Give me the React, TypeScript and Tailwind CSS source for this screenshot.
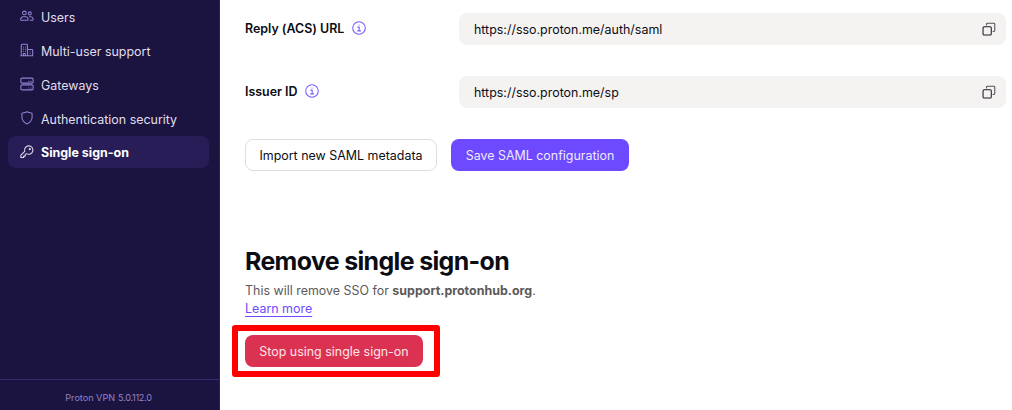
import type { ReactNode } from "react";

interface NavItem {
  label: string;
  icon: ReactNode;
  active?: boolean;
}

interface Field {
  label: string;
  value: string;
}

function Icon({ children, className = "" }: { children: ReactNode; className?: string }) {
  return (
    <svg
      viewBox="0 0 16 16"
      fill="none"
      stroke="currentColor"
      strokeWidth="1.2"
      strokeLinecap="round"
      strokeLinejoin="round"
      className={`size-[14px] shrink-0 ${className}`}
    >
      {children}
    </svg>
  );
}

const navItems: NavItem[] = [
  {
    label: "Users",
    icon: (
      <Icon>
        <circle cx="5" cy="4.5" r="2.1" />
        <circle cx="11.2" cy="5" r="1.7" />
        <path d="M3.2 8.8h3.6c1 0 1.7.6 2 1.5l.5 1.6c.1.5-.2.9-.7.9H1.4c-.5 0-.8-.4-.7-.9l.5-1.6c.3-.9 1-1.5 2-1.5ZM10.8 8.8h1.7c1 0 1.7.6 2 1.5l.6 1.6c.1.5-.2.9-.7.9h-2.9" />
      </Icon>
    ),
  },
  {
    label: "Multi-user support",
    icon: (
      <Icon>
        <path d="M1.5 14.5v-12a1 1 0 0 1 1-1h5a1 1 0 0 1 1 1v12M8.500 7.500h5a1 1 0 0 1 1 1v6H.8M4 14.500v-2.500h2v2.500" />
        <path d="M3.800 4.500h.1M6.200 4.500h.1M3.800 7h.1M6.200 7h.1M3.800 9.500h.1M6.200 9.500h.1M11.500 10h.1M11.500 12.300h.1" />
      </Icon>
    ),
  },
  {
    label: "Gateways",
    icon: (
      <Icon>
        <rect x="1" y="1.3" width="14" height="5.7" rx="1.3" />
        <rect x="1" y="9" width="14" height="5.7" rx="1.3" />
        <path d="M10 5h.1M12.5 5h.1M10 12.5h.1M12.5 12.5h.1" />
      </Icon>
    ),
  },
  {
    label: "Authentication security",
    icon: (
      <Icon>
        <path d="M8 .9c1.5.8 3.3 1.2 5.1 1.3.4 0 .7.3.7.7v4.3c0 3.4-2.3 6-5.8 7.6-3.5-1.6-5.8-4.2-5.8-7.6V2.900c0-.4.3-.7.7-.7C4.700 2.100 6.500 1.700 8 .9Z" />
      </Icon>
    ),
  },
  {
    label: "Single sign-on",
    active: true,
    icon: (
      <Icon>
        <path d="M10 1a4.800 4.800 0 0 0-4.600 6.200L1 11.600v2.700h3.200v-1.600h1.700v-1.700l1.600-1.100A4.800 4.800 0 1 0 10 1Z" />
        <circle cx="11.200" cy="4.700" r=".7" />
      </Icon>
    ),
  },
];

const fields: Field[] = [
  { label: "Reply (ACS) URL", value: "https://sso.proton.me/auth/saml" },
  { label: "Issuer ID", value: "https://sso.proton.me/sp" },
];

function InfoIcon() {
  return (
    <Icon className="text-[#7a5aff]">
      <circle cx="8" cy="8" r="7.2" />
      <path d="M6.7 7h1.5v4.2M6.5 11.3h3.300M8 4.600h.1" />
    </Icon>
  );
}

function CopyIcon() {
  return (
    <Icon className="text-[#1c1b24]">
      <rect x="1.2" y="5.4" width="9.4" height="9.4" rx="1.2" />
      <path d="M5.2 3.5V2.400a1 1 0 0 1 1-1h7.400a1 1 0 0 1 1 1v7.400a1 1 0 0 1-1 1h-1" className="opacity-75" />
    </Icon>
  );
}

function Sidebar() {
  return (
    <aside className="flex w-[220px] shrink-0 flex-col border-r border-[#2d2452] bg-[#1b1340]">
      <nav className="flex flex-col gap-[2px] pr-[10px] pl-2">
        {navItems.map((item) => (
          <a
            key={item.label}
            className={`flex h-8 items-center gap-[7px] rounded-lg pl-3 ${
              item.active ? "bg-[#281d56] font-bold text-white" : "text-[#e2dfec]"
            }`}
          >
            <span className={item.active ? "text-[#e2dfec]" : "text-[#9283d2]"}>{item.icon}</span>
            <span className={item.active ? "pt-[2px]" : "pt-[3px]"}>{item.label}</span>
          </a>
        ))}
      </nav>
      <footer className="mt-auto flex h-[31px] items-center justify-center gap-[3px] border-t border-[#352a70] pt-[6px] pr-[2px] text-[9.1px] text-[#9283c8]">
        <span>Proton VPN</span>
        <span className="tracking-[-0.03em]">5.0.112.0</span>
      </footer>
    </aside>
  );
}

export default function App() {
  return (
    <div className="flex h-[410px] w-[1012px] overflow-hidden bg-white font-['Inter',sans-serif] text-[12.45px] leading-[18px] text-[#0c0c14]">
      <Sidebar />
      <main className="flex-1 pt-[13px] pr-[6px] pl-[25px]">
        <div className="flex flex-col gap-[31px]">
          {fields.map((field) => (
            <div key={field.label} className="flex h-8">
              <div className="flex h-[30px] w-[214px] items-center gap-2 font-semibold">
                <span className="pt-[2px] tracking-[-0.01px]">{field.label}</span>
                <InfoIcon />
              </div>
              <div className="flex flex-1 items-center justify-between rounded-lg bg-[#f4f3f2] pr-[10px] pl-[15px]">
                <span className="pt-px">{field.value}</span>
                <CopyIcon />
              </div>
            </div>
          ))}
        </div>

        <div className="mt-[31px] flex gap-[14px]">
          <button className="h-8 w-[192px] rounded-lg border border-[#dedddc] pt-[2px]">Import new SAML metadata</button>
          <button className="h-8 w-[178px] rounded-lg bg-[#6d4aff] pt-[2px] text-[#eee9ff]">Save SAML configuration</button>
        </div>

        <h2 className="mt-[74px] text-[24.9px] leading-[32px] font-bold tracking-[-0.63px]">Remove single sign-on</h2>
        <p className="mt-[5px] text-[#5c5958]">
          This will remove SSO for <b>support.protonhub.org</b>.
        </p>
        <a className="block text-[#6d4aff] underline underline-offset-3">Learn more</a>

        {/* highlighted action */}
        <div className="mt-[7px] -ml-[13px] h-[52px] w-[208px] rounded-[3px] border-[6px] border-[#ff0000] pt-1 pl-[7px]">
          <button className="h-8 w-[178px] rounded-lg bg-[#dc3251] pt-[2px] text-[#ffe5ea]">Stop using single sign-on</button>
        </div>
      </main>
    </div>
  );
}
